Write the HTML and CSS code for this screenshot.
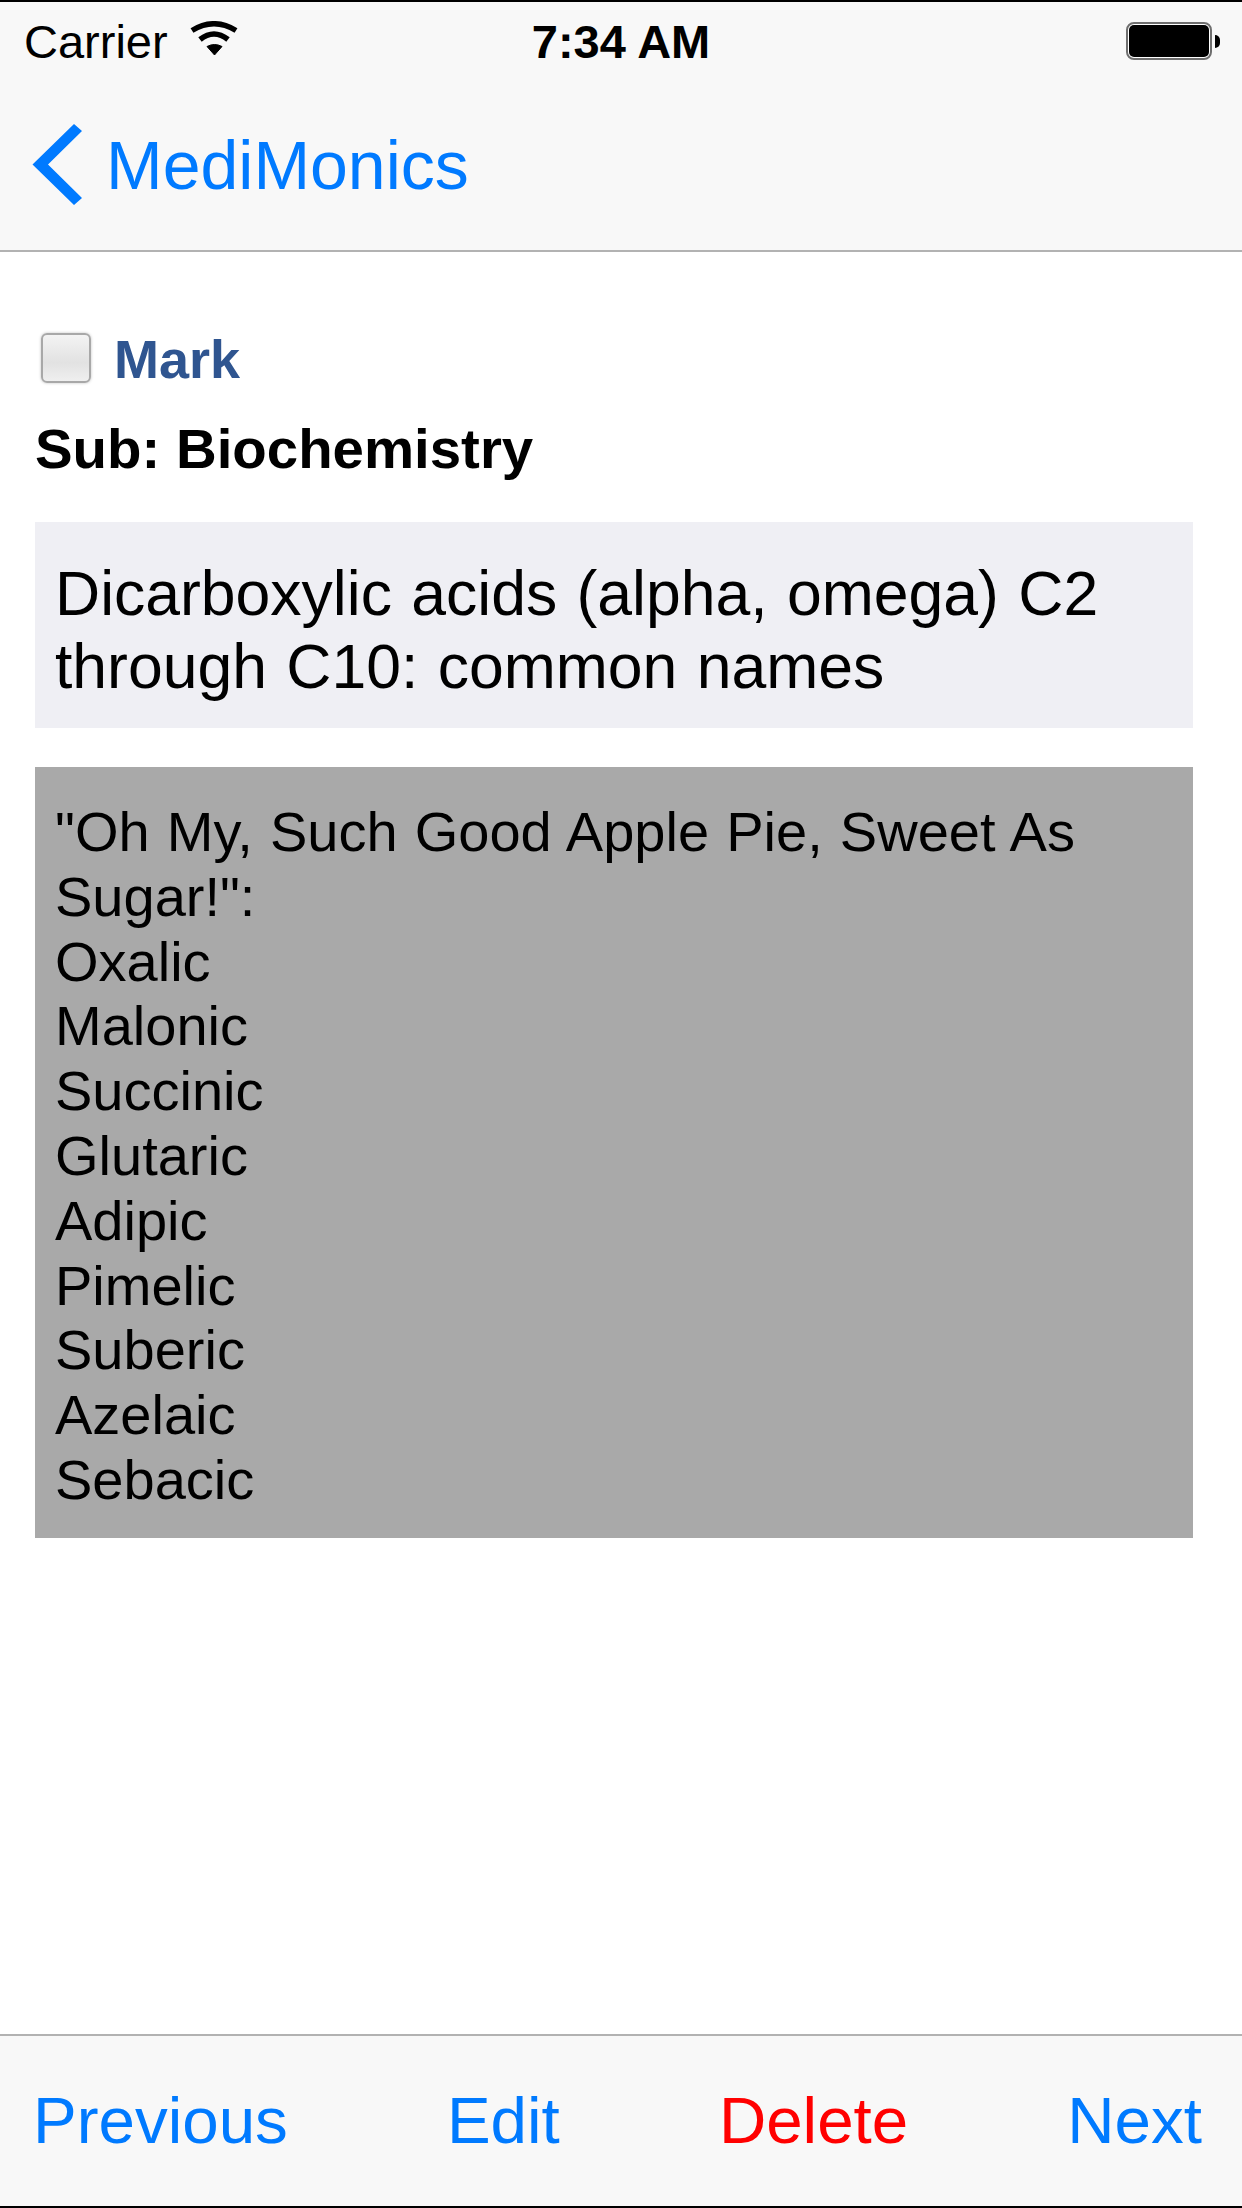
FILE: index.html
```html
<!DOCTYPE html>
<html lang="en">
<head>
<meta charset="utf-8">
<title>MediMonics</title>
<link rel="stylesheet" href="styles.css">
</head>
<body>
<div class="screen">
  <header class="topbar">
    <div class="status">
      <div class="status-left">
        <span class="carrier">Carrier</span>
        <svg class="wifi" viewBox="0 0 48 34" aria-hidden="true">
          <path d="M24.5 34 L17 25.5 Q24.5 21.5 32 25.5 Z" fill="#000" stroke="#000" stroke-width="1" stroke-linejoin="round"/>
          <path d="M10 18.5 Q24 7.5 38 18.5" fill="none" stroke="#000" stroke-width="5.5"/>
          <path d="M2 9.5 Q24 -4 46 9.5" fill="none" stroke="#000" stroke-width="5.5"/>
        </svg>
      </div>
      <span class="time">7:34 AM</span>
      <div class="battery">
        <span class="battery-shell"><span class="battery-fill"></span></span>
        <span class="battery-nub"></span>
      </div>
    </div>
    <nav class="nav">
      <svg class="chevron" viewBox="0 0 50 81" aria-hidden="true">
        <polygon points="42,0 50,7 16,40.5 50,74 42,81 0.5,40.5" fill="#007aff"/>
      </svg>
      <span class="nav-title">MediMonics</span>
    </nav>
  </header>
  <main class="content">
    <div class="mark-row">
      <span class="checkbox"></span>
      <span class="mark">Mark</span>
    </div>
    <h1 class="subject">Sub: Biochemistry</h1>
    <div class="question">Dicarboxylic acids (alpha, omega) C2 through C10: common names</div>
    <div class="answer">"Oh My, Such Good Apple Pie, Sweet As Sugar!":<br>Oxalic<br>Malonic<br>Succinic<br>Glutaric<br>Adipic<br>Pimelic<br>Suberic<br>Azelaic<br>Sebacic</div>
  </main>
  <footer class="toolbar">
    <span class="tool">Previous</span>
    <span class="tool">Edit</span>
    <span class="tool danger">Delete</span>
    <span class="tool">Next</span>
  </footer>
</div>
</body>
</html>
```
FILE: styles.css
```css
* { box-sizing: border-box; }
html, body { margin: 0; padding: 0; background: #fff; }
body { font-family: "Liberation Sans", Arial, sans-serif; color: #000; }
.screen { width: 1242px; height: 2208px; display: flex; flex-direction: column; overflow: hidden; border-bottom: 2px solid #000; }
.topbar { height: 252px; flex: none; background: #f8f8f8; border-top: 2px solid #000; border-bottom: 2px solid #b2b2b2; }
.status { height: 80px; position: relative; display: flex; align-items: center; justify-content: space-between; padding: 0 22px 0 24px; }
.status-left { display: flex; align-items: center; gap: 22px; }
.carrier { font-size: 47px; line-height: 54px; }
.wifi { width: 48px; height: 34px; margin-top: -8px; }
.time { position: absolute; left: 0; right: 0; text-align: center; font-size: 47px; line-height: 54px; font-weight: bold; pointer-events: none; }
.battery { display: flex; align-items: center; gap: 3px; margin-top: -2px; }
.battery-shell { display: block; width: 86px; height: 38px; padding: 1px; background: #fff; border: 2px solid #6f6f6f; border-radius: 8px; }
.battery-fill { display: block; width: 100%; height: 100%; background: #000; border-radius: 5px; }
.battery-nub { display: block; width: 5px; height: 13px; background: #000; border-radius: 0 6px 6px 0; }
.nav { height: 168px; display: flex; align-items: center; padding: 0 0 0 32px; gap: 24px; }
.chevron { width: 50px; height: 81px; flex: none; margin-top: -4px; }
.nav-title { font-size: 68px; line-height: 76px; color: #007aff; margin-top: -2px; }
.content { flex: 1; padding: 81px 49px 0 35px; display: flex; flex-direction: column; }
.mark-row { display: flex; align-items: center; height: 50px; padding-left: 6px; gap: 23px; }
.checkbox { width: 50px; height: 50px; flex: none; border: 2px solid #a8a8a8; border-radius: 6px; background: linear-gradient(#f3f3f3, #e2e2e2 60%, #efefef); box-shadow: 0 0 3px rgba(0,0,0,.25); }
.mark { font-size: 54px; line-height: 60px; font-weight: bold; color: #2f5590; margin-top: 1px; }
.subject { margin: 36px 0 0; font-size: 56.4px; line-height: 60px; font-weight: bold; }
.question { margin-top: 43px; background: #efeff4; padding: 35px 20px 0; height: 206px; font-size: 62.5px; word-spacing: 2px; line-height: 73px; }
.answer { margin-top: 39px; background: #a9a9a9; padding: 33px 20px 0; height: 771px; font-size: 56px; word-spacing: 1.6px; line-height: 64.8px; }
.toolbar { height: 172px; flex: none; background: #f8f8f8; border-top: 2px solid #b2b2b2; display: flex; align-items: center; justify-content: space-between; padding: 0 40px 0 33px; }
.tool { font-size: 65.5px; line-height: 76px; color: #007aff; }
.danger { color: #ff0000; }
```
